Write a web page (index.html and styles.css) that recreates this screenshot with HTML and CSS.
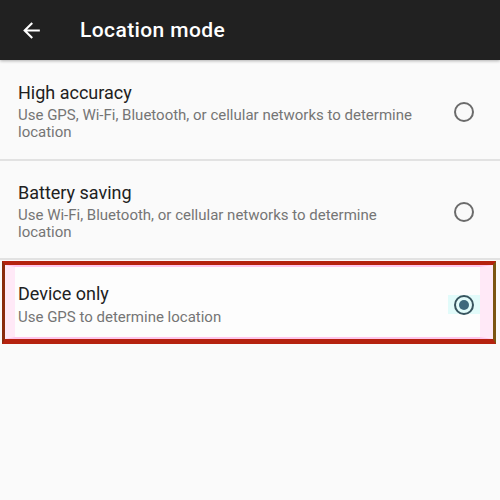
FILE: index.html
```html
<!DOCTYPE html>
<html>
<head>
<meta charset="utf-8">
<link rel="stylesheet" href="styles.css">
</head>
<body>
<header class="toolbar">
  <svg class="back" viewBox="0 0 24 24" width="25" height="25"><path fill="#fff" d="M20 11H7.83l5.59-5.59L12 4l-8 8 8 8 1.41-1.41L7.83 13H20v-2z"/></svg>
  <h1 class="title">Location mode</h1>
</header>
<main class="list">
  <div class="item first">
    <div class="text">
      <div class="name">High accuracy</div>
      <div class="desc">Use GPS, Wi-Fi, Bluetooth, or cellular networks to determine location</div>
    </div>
    <div class="radio-wrap"><span class="radio"></span></div>
  </div>
  <div class="item">
    <div class="text">
      <div class="name">Battery saving</div>
      <div class="desc">Use Wi-Fi, Bluetooth, or cellular networks to determine location</div>
    </div>
    <div class="radio-wrap"><span class="radio"></span></div>
  </div>
  <div class="selected">
    <div class="inner">
      <div class="text">
        <div class="name">Device only</div>
        <div class="desc sel">Use GPS to determine location</div>
      </div>
      <div class="radio-wrap hl"><span class="radio checked"></span></div>
    </div>
  </div>
</main>
</body>
</html>
```
FILE: styles.css
```css
html, body {
  margin: 0;
  padding: 0;
  background: #fafafa;
  font-family: Roboto, "Noto Sans", sans-serif;
}
.toolbar {
  height: 60px;
  background: #212121;
  display: flex;
  align-items: center;
  box-shadow: 0 1px 3px rgba(0,0,0,0.3);
  position: relative;
}
.back {
  margin-left: 19px;
  display: block;
}
.title {
  margin: 0 0 0 36px;
  color: #fff;
  font-size: 21px;
  font-weight: 500;
  letter-spacing: 0.4px;
  line-height: 24px;
}
.list {
  display: flex;
  flex-direction: column;
}
.item {
  display: flex;
  align-items: center;
  padding: 21px 26px 17px 18px;
  border-bottom: 2px solid #e2e2e2;
}
.item.first {
  padding-top: 22px;
  padding-bottom: 18px;
}
.text {
  flex: 1;
}
.name {
  font-size: 18px;
  line-height: 22px;
  color: #212121;
}
.desc {
  margin-top: 3px;
  font-size: 15px;
  line-height: 17px;
  color: #757575;
  max-width: 402px;
}
.desc.sel {
  margin-top: 4px;
}
.radio-wrap {
  width: 20px;
  display: flex;
  justify-content: center;
  align-items: center;
}
.radio {
  box-sizing: border-box;
  width: 20px;
  height: 20px;
  border: 2px solid #6b6b6b;
  border-radius: 50%;
  display: flex;
  align-items: center;
  justify-content: center;
}
.radio.checked {
  border-color: #37545e;
}
.radio.checked::after {
  content: "";
  width: 10px;
  height: 10px;
  border-radius: 50%;
  background: #3e687c;
}
.selected {
  margin: 1px 4px 0 2px;
  border-top: 4px solid #b5220f;
  border-bottom: 5px solid #b5220f;
  border-left: 3px solid #8a2b0c;
  border-right: 3px solid #7b5512;
  background: #fdfdfd;
}
.inner {
  display: flex;
  align-items: center;
  border-top: 2px solid #ffc6ec;
  border-bottom: 2px solid #ffc6ec;
  border-left: 10px solid #ffe9f7;
  border-right: 13px solid #ffe9f7;
  padding: 16px 0 11px 3px;
}
.radio-wrap.hl {
  width: 32px;
  height: 19px;
  background: #e2fbfa;
}
```
